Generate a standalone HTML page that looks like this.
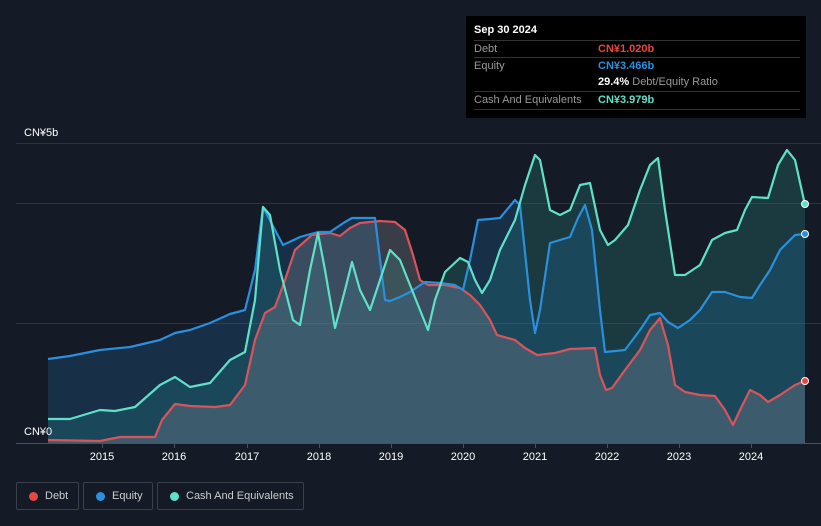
<!DOCTYPE html>
<html><head><meta charset="utf-8"><style>
html,body{margin:0;padding:0;background:#151b26;width:821px;height:526px;overflow:hidden;font-family:"Liberation Sans",sans-serif}
.tt{position:absolute;left:466px;top:16px;width:340px;height:102px;background:#000;color:#fff;font-size:11px}
.tt .row{position:absolute;left:8px;right:6px;border-top:1px solid #333;height:17px;line-height:17px}
.tt .l{color:#999;position:absolute;left:0}
.tt .v{position:absolute;left:124px;font-weight:bold}
.lg{position:absolute;top:482px;height:28px;border:1px solid #3a404c;border-radius:2px;color:#ccc;font-size:11px;line-height:26px;box-sizing:border-box;white-space:nowrap;overflow:hidden}
.lg i{position:absolute;left:12px;top:9px;width:9px;height:9px;border-radius:50%}
</style></head><body>
<svg width="821" height="526" style="position:absolute;left:0;top:0">
<g stroke="#2c3340" stroke-width="1">
<line x1="16" y1="143.5" x2="821" y2="143.5"/><line x1="16" y1="203.5" x2="821" y2="203.5"/><line x1="16" y1="323.5" x2="821" y2="323.5"/>
</g>
<path d="M48,419 L70,419 L100,410 L115,411 L135,407 L160,385 L175,377 L190,387 L210,383 L230,360 L245,352 L255,300 L263,207 L270,215 L280,270 L293,320 L300,325 L310,270 L318,233 L325,270 L335,328 L345,290 L352,262 L360,290 L370,310 L380,280 L390,250 L400,260 L410,285 L420,310 L428,330 L435,300 L445,272 L460,258 L468,262 L475,280 L482,293 L490,280 L500,250 L515,220 L525,185 L535,155 L540,160 L550,210 L560,215 L570,210 L580,185 L590,183 L600,230 L608,245 L615,240 L628,225 L640,190 L650,165 L658,158 L665,210 L675,275 L685,275 L700,265 L712,240 L725,233 L737,230 L745,210 L752,197 L768,198 L778,165 L787,150 L795,160 L805,205 L805,443 L48,443Z" fill="#2fa89a" fill-opacity="0.22"/>
<path d="M48,359 L70,356 L100,350 L130,347 L160,340 L175,333 L190,330 L210,323 L230,314 L245,310 L255,270 L263,207 L275,230 L283,245 L300,237 L318,232 L330,232 L345,222 L352,218 L375,218 L385,300 L390,301 L400,297 L410,292 L425,282 L440,283 L455,285 L463,290 L470,260 L478,220 L490,219 L500,218 L515,200 L520,205 L530,300 L535,333 L540,310 L550,243 L560,240 L570,237 L578,218 L585,205 L592,230 L600,310 L605,352 L625,350 L640,330 L650,315 L660,313 L668,322 L678,328 L690,320 L700,310 L712,292 L725,292 L740,297 L752,298 L760,285 L770,270 L780,250 L795,235 L805,234 L805,443 L48,443Z" fill="#1e6fb0" fill-opacity="0.25"/>
<path d="M48,440 L100,441 L120,437 L155,437 L162,420 L175,404 L190,406 L215,407 L230,405 L245,385 L255,340 L265,313 L275,307 L285,280 L295,250 L312,235 L330,233 L340,236 L350,228 L360,223 L380,221 L395,222 L405,230 L413,255 L420,280 L428,285 L445,285 L460,288 L470,295 L480,305 L490,320 L497,335 L515,340 L525,348 L537,355 L555,353 L570,349 L595,348 L600,375 L606,390 L612,388 L625,370 L640,350 L650,330 L660,318 L668,345 L675,385 L685,392 L700,395 L715,396 L725,410 L733,425 L740,410 L750,390 L760,395 L768,402 L780,395 L795,385 L805,381 L805,443 L48,443Z" fill="#8a8f99" fill-opacity="0.3"/>
<g fill="none" stroke-width="2.2" stroke-linejoin="round">
<path stroke="#d9545a" d="M48,440 L100,441 L120,437 L155,437 L162,420 L175,404 L190,406 L215,407 L230,405 L245,385 L255,340 L265,313 L275,307 L285,280 L295,250 L312,235 L330,233 L340,236 L350,228 L360,223 L380,221 L395,222 L405,230 L413,255 L420,280 L428,285 L445,285 L460,288 L470,295 L480,305 L490,320 L497,335 L515,340 L525,348 L537,355 L555,353 L570,349 L595,348 L600,375 L606,390 L612,388 L625,370 L640,350 L650,330 L660,318 L668,345 L675,385 L685,392 L700,395 L715,396 L725,410 L733,425 L740,410 L750,390 L760,395 L768,402 L780,395 L795,385 L805,381"/>
<path stroke="#2a8fdc" d="M48,359 L70,356 L100,350 L130,347 L160,340 L175,333 L190,330 L210,323 L230,314 L245,310 L255,270 L263,207 L275,230 L283,245 L300,237 L318,232 L330,232 L345,222 L352,218 L375,218 L385,300 L390,301 L400,297 L410,292 L425,282 L440,283 L455,285 L463,290 L470,260 L478,220 L490,219 L500,218 L515,200 L520,205 L530,300 L535,333 L540,310 L550,243 L560,240 L570,237 L578,218 L585,205 L592,230 L600,310 L605,352 L625,350 L640,330 L650,315 L660,313 L668,322 L678,328 L690,320 L700,310 L712,292 L725,292 L740,297 L752,298 L760,285 L770,270 L780,250 L795,235 L805,234"/>
<path stroke="#5fe0c8" d="M48,419 L70,419 L100,410 L115,411 L135,407 L160,385 L175,377 L190,387 L210,383 L230,360 L245,352 L255,300 L263,207 L270,215 L280,270 L293,320 L300,325 L310,270 L318,233 L325,270 L335,328 L345,290 L352,262 L360,290 L370,310 L380,280 L390,250 L400,260 L410,285 L420,310 L428,330 L435,300 L445,272 L460,258 L468,262 L475,280 L482,293 L490,280 L500,250 L515,220 L525,185 L535,155 L540,160 L550,210 L560,215 L570,210 L580,185 L590,183 L600,230 L608,245 L615,240 L628,225 L640,190 L650,165 L658,158 L665,210 L675,275 L685,275 L700,265 L712,240 L725,233 L737,230 L745,210 L752,197 L768,198 L778,165 L787,150 L795,160 L805,205"/>
</g>
<circle cx="805" cy="381" r="3.5" fill="#e84545" stroke="#fff" stroke-width="1"/>
<circle cx="805" cy="234" r="3.5" fill="#2a8fdc" stroke="#fff" stroke-width="1"/>
<circle cx="805" cy="204" r="3.5" fill="#5fe0c8" stroke="#fff" stroke-width="1"/>
<line x1="16" y1="443.5" x2="821" y2="443.5" stroke="#4a505c"/>
<g stroke="#4a505c"><line x1="102.5" y1="443" x2="102.5" y2="448"/><line x1="174.5" y1="443" x2="174.5" y2="448"/><line x1="247.5" y1="443" x2="247.5" y2="448"/><line x1="319.5" y1="443" x2="319.5" y2="448"/><line x1="391.5" y1="443" x2="391.5" y2="448"/><line x1="463.5" y1="443" x2="463.5" y2="448"/><line x1="535.5" y1="443" x2="535.5" y2="448"/><line x1="607.5" y1="443" x2="607.5" y2="448"/><line x1="679.5" y1="443" x2="679.5" y2="448"/><line x1="751.5" y1="443" x2="751.5" y2="448"/></g>
<g fill="#fff" font-size="11" text-anchor="middle" font-family="Liberation Sans,sans-serif">
<text x="102" y="460">2015</text><text x="174" y="460">2016</text><text x="247" y="460">2017</text><text x="319" y="460">2018</text><text x="391" y="460">2019</text><text x="463" y="460">2020</text><text x="535" y="460">2021</text><text x="607" y="460">2022</text><text x="679" y="460">2023</text><text x="751" y="460">2024</text>
</g>
<text x="24" y="136" fill="#fff" font-size="11" font-family="Liberation Sans,sans-serif">CN¥5b</text>
<text x="24" y="435" fill="#fff" font-size="11" font-family="Liberation Sans,sans-serif">CN¥0</text>
</svg>
<div class="tt">
<div style="position:absolute;left:8px;top:8px;font-weight:bold">Sep 30 2024</div>
<div class="row" style="top:24px"><span class="l">Debt</span><span class="v" style="color:#e84545">CN¥1.020b</span></div>
<div class="row" style="top:41px"><span class="l">Equity</span><span class="v" style="color:#2a8fdc">CN¥3.466b</span></div>
<div class="row" style="top:58px;border-top:none"><span class="v" style="color:#fff">29.4% <span style="color:#999;font-weight:normal">Debt/Equity Ratio</span></span></div>
<div class="row" style="top:75px;border-bottom:1px solid #333"><span class="l">Cash And Equivalents</span><span class="v" style="color:#5fe0c8">CN¥3.979b</span></div>
</div>
<div class="lg" style="left:16px;width:63px"><i style="background:#e84545"></i><span style="position:absolute;left:28px">Debt</span></div>
<div class="lg" style="left:83px;width:70px"><i style="background:#2a8fdc"></i><span style="position:absolute;left:28px">Equity</span></div>
<div class="lg" style="left:157px;width:147px"><i style="background:#5fe0c8"></i><span style="position:absolute;left:28px">Cash And Equivalents</span></div>
</body></html>
